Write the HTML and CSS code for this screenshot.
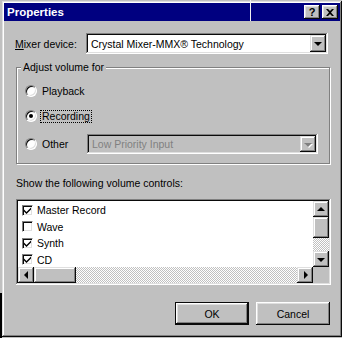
FILE: index.html
```html
<!DOCTYPE html>
<html lang="en">
<head>
    <meta charset="UTF-8">
    <title>Properties</title>
    <link rel="stylesheet" href="styles.css">
</head>
<body>
    <div class="window">
        <div class="titlebar">
            <span class="title">Properties</span>
            <div class="cap-buttons">
                <span class="cap-btn help">?</span>
                <span class="cap-btn close">
                    <svg width="8" height="7" viewBox="0 0 8 7"><path d="M0 0h2l2 2 2-2h2L5 3.5 8 7H6L4 5 2 7H0l3-3.5z" fill="#000"/></svg>
                </span>
            </div>
        </div>

        <div class="content">
            <!-- mixer device -->
            <div class="mixer-row">
                <span class="mixer-label"><u>M</u>ixer device:</span>
                <div class="combo">
                    <span class="combo-text">Crystal Mixer-MMX® Technology</span>
                    <span class="drop-btn"><i class="tri-down"></i></span>
                </div>
            </div>

            <!-- adjust volume group -->
            <fieldset class="group">
                <legend>Adjust volume for</legend>
                <div class="radio-row first">
                    <span class="radio"></span>
                    <span class="radio-text">Playback</span>
                </div>
                <div class="radio-row second">
                    <span class="radio checked"></span>
                    <span class="radio-text focused">Recording</span>
                </div>
                <div class="radio-row third">
                    <span class="radio"></span>
                    <span class="radio-text other">Other</span>
                    <div class="combo disabled">
                        <span class="combo-text">Low Priority Input</span>
                        <span class="drop-btn"><i class="tri-down"></i></span>
                    </div>
                </div>
            </fieldset>

            <div class="list-label">Show the following volume controls:</div>

            <div class="listbox">
                <div class="items">
                    <div class="item"><span class="check on"><svg width="7" height="7" viewBox="0 0 7 7"><path d="M0 2.5l2.5 2.5L7 0.5v2L2.5 7 0 4.5z" fill="#000"/></svg></span>Master Record</div>
                    <div class="item"><span class="check"></span>Wave</div>
                    <div class="item"><span class="check on"><svg width="7" height="7" viewBox="0 0 7 7"><path d="M0 2.5l2.5 2.5L7 0.5v2L2.5 7 0 4.5z" fill="#000"/></svg></span>Synth</div>
                    <div class="item"><span class="check on"><svg width="7" height="7" viewBox="0 0 7 7"><path d="M0 2.5l2.5 2.5L7 0.5v2L2.5 7 0 4.5z" fill="#000"/></svg></span>CD</div>
                </div>
                <div class="vscroll">
                    <span class="sb-btn"><i class="tri-up"></i></span>
                    <span class="sb-thumb v"></span>
                    <span class="sb-track"></span>
                    <span class="sb-btn"><i class="tri-down"></i></span>
                </div>
                <div class="hscroll">
                    <span class="sb-btn"><i class="tri-left"></i></span>
                    <span class="sb-thumb h"></span>
                    <span class="sb-track"></span>
                    <span class="sb-btn"><i class="tri-right"></i></span>
                </div>
                <div class="corner"></div>
            </div>

            <div class="buttons">
                <span class="btn default">OK</span>
                <span class="btn">Cancel</span>
            </div>
        </div>
    </div>

    <!-- bits of the desktop caught in the shot -->
    <div class="seam"></div>
    <div class="desk-edge"></div>
</body>
</html>
```

FILE: styles.css
```css
* {
    box-sizing: border-box;
}
body {
    margin: 0;
    width: 342px;
    height: 338px;
    overflow: hidden;
    position: relative;
    background: #c0c0c0;
    font-family: "Liberation Sans", Arial, sans-serif;
    font-size: 10.5px;
    color: #000;
}

/* window frame */
.window {
    margin: 1px 0 0 2px;
    width: 340px;
    height: 336px;
    padding: 2px;
    background: #c0c0c0;
    box-shadow: inset -1px -1px #0a0a0a, inset 1px 1px #dfdfdf,
                inset -2px -2px #808080, inset 2px 2px #fff;
}
.titlebar {
    height: 18px;
    background: #000080;
    display: flex;
    align-items: center;
    padding: 0 2px 0 3px;
}
.title {
    color: #fff;
    font-weight: bold;
    font-size: 11.5px;
}
.cap-buttons {
    margin-left: auto;
    display: flex;
    gap: 2px;
}
.cap-btn {
    width: 16px;
    height: 14px;
    background: #c0c0c0;
    display: flex;
    align-items: center;
    justify-content: center;
    box-shadow: inset -1px -1px #0a0a0a, inset 1px 1px #fff,
                inset -2px -2px #808080, inset 2px 2px #dfdfdf;
}
.help {
    font-weight: bold;
    font-size: 11px;
    padding-bottom: 1px;
}

.content {
    display: flex;
    flex-direction: column;
    padding: 0 10px 0 12px;
}

/* mixer device row */
.mixer-row {
    margin-top: 12px;
    height: 21px;
    display: flex;
    align-items: center;
}
.mixer-label {
    width: 71px;
    margin-left: -1px;
}
.combo {
    width: 242px;
    height: 21px;
    padding: 2px;
    background: #fff;
    display: flex;
    align-items: center;
    box-shadow: inset -1px -1px #fff, inset 1px 1px #808080,
                inset -2px -2px #dfdfdf, inset 2px 2px #0a0a0a;
}
.combo-text {
    flex: 1;
    padding-left: 3px;
    white-space: nowrap;
}
.drop-btn {
    width: 16px;
    height: 100%;
    background: #c0c0c0;
    display: flex;
    align-items: center;
    justify-content: center;
    box-shadow: inset -1px -1px #0a0a0a, inset 1px 1px #dfdfdf,
                inset -2px -2px #808080, inset 2px 2px #fff;
}
.combo.disabled {
    width: 231px;
    height: 20px;
    background: #c0c0c0;
    color: #808080;
}
.combo.disabled .tri-down {
    border-top-color: #808080;
    filter: drop-shadow(1px 1px 0 #fff);
}

/* triangles */
.tri-down, .tri-up, .tri-left, .tri-right {
    width: 0;
    height: 0;
    border: 4px solid transparent;
}
.tri-down {
    border-top: 4px solid #000;
    border-bottom: 0;
    margin-top: 1px;
}
.tri-up {
    border-bottom: 4px solid #000;
    border-top: 0;
    margin-top: -1px;
}
.tri-left {
    border-right: 4px solid #000;
    border-left: 0;
    margin-left: -1px;
}
.tri-right {
    border-left: 4px solid #000;
    border-right: 0;
    margin-left: 1px;
}

/* group box */
.group {
    margin: 7px 0 0 0;
    padding: 0;
    min-width: 0;
    border: 1px solid #808080;
    box-shadow: inset 1px 1px #fff, 1px 1px #fff;
}
.group legend {
    margin-left: 4px;
    padding: 0 2px;
    line-height: 13px;
    background: #c0c0c0;
}
.radio-row {
    display: flex;
    align-items: center;
    height: 20px;
    margin-left: 8px;
}
.radio-row.first { margin-top: 7px; }
.radio-row.second { margin-top: 5px; }
.radio-row.third { margin-top: 8px; margin-bottom: 9px; }
.radio {
    width: 12px;
    height: 12px;
    border-radius: 50%;
    background: #fff;
    border: 1px solid;
    border-color: #808080 #fff #fff #808080;
    box-shadow: inset 1px 1px #0a0a0a, inset -1px -1px #dfdfdf;
    display: flex;
    align-items: center;
    justify-content: center;
}
.radio.checked::after {
    content: "";
    width: 4px;
    height: 4px;
    border-radius: 50%;
    background: #000;
}
.radio-text {
    margin-left: 3px;
    padding: 0 1px;
    line-height: 11px;
    border: 1px solid transparent;
}
.radio-text.focused {
    border: 1px dotted #000;
}
.radio-text.other {
    width: 47px;
}

.list-label {
    margin-top: 12px;
    line-height: 14px;
}

/* list box with check items */
.listbox {
    margin-top: 9px;
    width: 315px;
    height: 86px;
    padding: 2px;
    background: #fff;
    display: grid;
    grid-template-columns: 1fr 16px;
    grid-template-rows: 1fr 16px;
    box-shadow: inset -1px -1px #fff, inset 1px 1px #808080,
                inset -2px -2px #dfdfdf, inset 2px 2px #0a0a0a;
}
.items {
    padding-top: 1px;
    overflow: hidden;
}
.item {
    height: 16.5px;
    display: flex;
    align-items: center;
    white-space: nowrap;
}
.check {
    width: 11px;
    height: 11px;
    margin: 0 4px 0 4px;
    background: #fff;
    border: 1px solid;
    border-color: #808080 #fff #fff #808080;
    box-shadow: inset 1px 1px #0a0a0a, inset -1px -1px #dfdfdf;
    display: flex;
    align-items: center;
    justify-content: center;
}
.check svg {
    display: block;
}

.vscroll, .hscroll {
    display: flex;
    background-color: #fff;
    background-image: conic-gradient(#c0c0c0 25%, #fff 0 50%, #c0c0c0 0 75%, #fff 0);
    background-size: 2px 2px;
}
.vscroll {
    flex-direction: column;
}
.sb-btn {
    flex: 0 0 16px;
    width: 16px;
    height: 16px;
    background: #c0c0c0;
    display: flex;
    align-items: center;
    justify-content: center;
    box-shadow: inset -1px -1px #0a0a0a, inset 1px 1px #dfdfdf,
                inset -2px -2px #808080, inset 2px 2px #fff;
}
.sb-thumb {
    background: #c0c0c0;
    box-shadow: inset -1px -1px #0a0a0a, inset 1px 1px #dfdfdf,
                inset -2px -2px #808080, inset 2px 2px #fff;
}
.sb-thumb.v {
    flex: 0 0 21px;
}
.sb-thumb.h {
    flex: 0 0 42px;
}
.sb-track {
    flex: 1;
}
.corner {
    background: #c0c0c0;
}

/* dialog buttons */
.buttons {
    margin-top: 17px;
    display: flex;
    justify-content: flex-end;
    gap: 7px;
}
.btn {
    width: 74px;
    height: 23px;
    display: flex;
    align-items: center;
    justify-content: center;
    background: #c0c0c0;
    box-shadow: inset -1px -1px #0a0a0a, inset 1px 1px #fff,
                inset -2px -2px #808080, inset 2px 2px #dfdfdf;
}
.btn.default {
    box-shadow: inset 0 0 0 1px #0a0a0a,
                inset -2px -2px #0a0a0a, inset 2px 2px #fff,
                inset -3px -3px #808080, inset 3px 3px #dfdfdf;
}

/* stray pixels from the screenshot */
.seam {
    position: absolute;
    left: 250px;
    top: 0;
    width: 1px;
    height: 21px;
    background: #f0f0f0;
}
.desk-edge {
    position: absolute;
    left: 0;
    top: 293px;
    width: 2px;
    height: 45px;
    background: #000;
}
```
